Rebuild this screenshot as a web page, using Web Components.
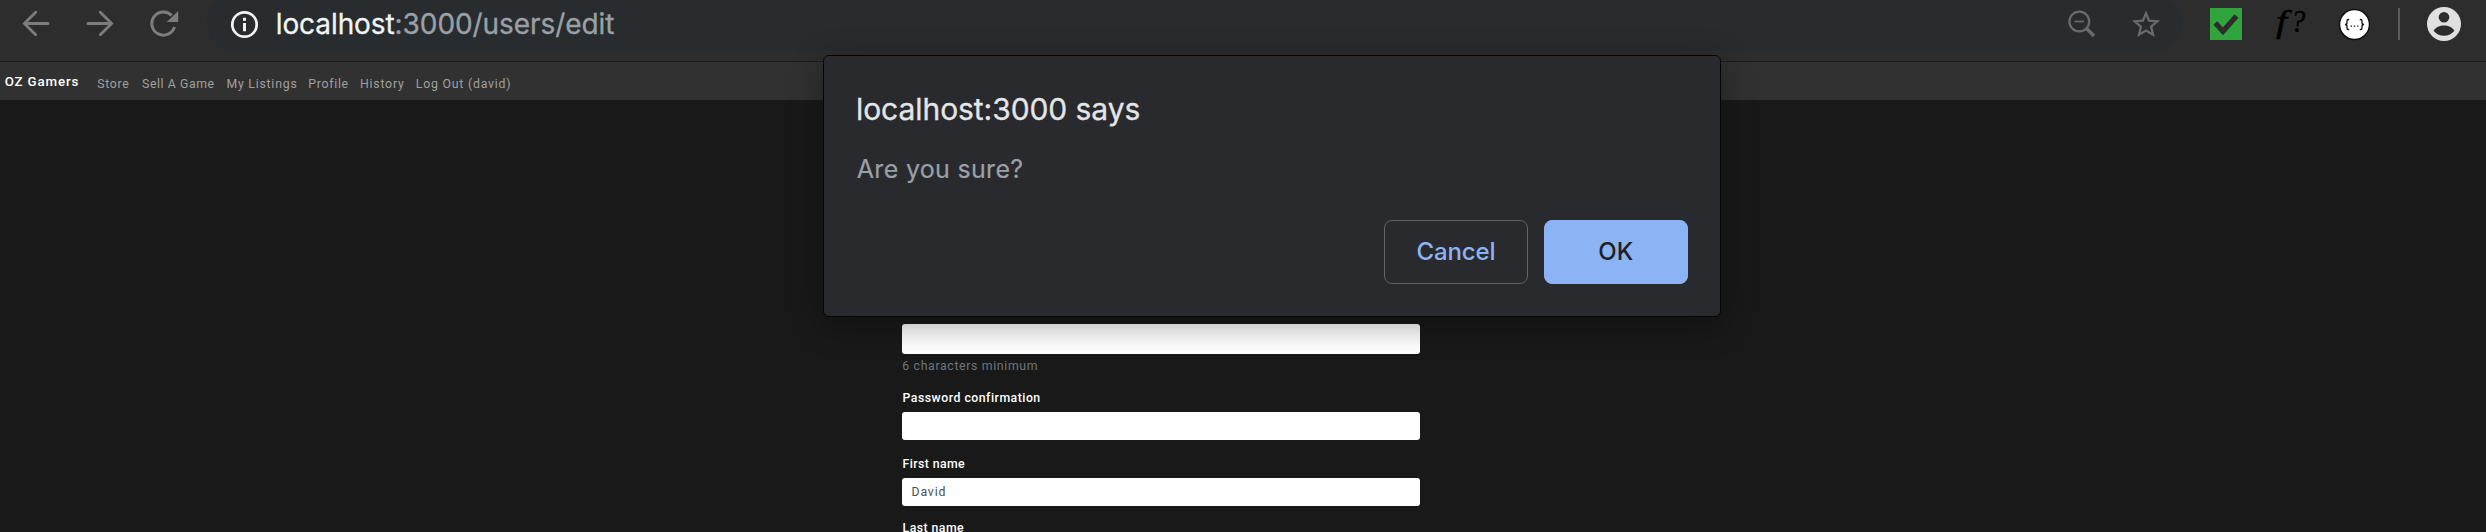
<!DOCTYPE html>
<html lang="en">
<head>
<meta charset="utf-8">
<title>OZ Gamers</title>
<style>
html,body{margin:0;height:532px;overflow:hidden;background:#191919}
body{font-family:Inter,"Liberation Sans",sans-serif;color:#fff}
</style>
</head>
<body>
<browser-window></browser-window>
<script>
const define = (name, html, Base = HTMLElement) => {
  const t = document.createElement('template');
  t.innerHTML = html;
  customElements.define(name, class extends Base {
    constructor() {
      super();
      this.attachShadow({mode: 'open'}).append(t.content.cloneNode(true));
    }
  });
};

/* A single line of text tracked so that its ink spans the width given in w. */
class TrackedBase extends HTMLElement {
  connectedCallback() {
    const w = parseFloat(this.getAttribute('w'));
    const text = this.textContent;
    const cs = getComputedStyle(this);
    const ctx = document.createElement('canvas').getContext('2d');
    ctx.font = `${cs.fontStyle} ${cs.fontWeight} ${cs.fontSize} ${cs.fontFamily}`;
    const m = ctx.measureText(text);
    const ink = m.actualBoundingBoxRight + m.actualBoundingBoxLeft;
    this.style.letterSpacing = ((w - ink) / (text.length - 1)).toFixed(3) + 'px';
    this.style.textIndent = m.actualBoundingBoxLeft.toFixed(2) + 'px';
    this.style.width = w + 'px';
  }
}
define('tracked-text', `<style>:host{display:block;white-space:nowrap;flex:none}</style><slot></slot>`, TrackedBase);

define('tool-bar', `<style>
:host{display:flex;align-items:flex-start;height:61px;background:#2d2d2d;border-bottom:1px solid #1b1b1b;box-sizing:content-box}
svg{display:block;flex:none}
.nav{width:207px;height:50px}
.omni{display:flex;width:1975px;height:55px;margin-top:-4px;border-radius:28px;background:#282c2f;flex:none;align-items:flex-start}
.omni svg{margin-top:4px}
.url{font-size:28px;line-height:40px;margin:8px 0 0 .700px;color:#9aa0a6;-webkit-text-stroke:.3px currentColor}
.url b{font-weight:400;color:#f1f3f4;-webkit-text-stroke:.3px #f1f3f4}
.gap{flex:1}
.fn{display:flex;width:32px;flex:none;font:italic 31px/40px "Liberation Serif",serif;color:#000;-webkit-text-stroke:.4px #000;margin:2px 32px 0 32px}
.fn span{display:block;transform-origin:0 0}
.fn .f{transform:scaleX(1.300);width:20px;text-indent:1.500px}
.fn .q{transform:scaleX(.920)}
</style>
<svg class="nav" viewBox="0 0 207 50" fill="none" stroke="#7d7d7d" stroke-width="2.8" stroke-linecap="round">
<path d="M48 23.5H24.5M35.7 12.3 24.4 23.5l11.3 11.3"/><path d="M88 23.5h23.500M100.300 12.300 111.600 23.500l-11.300 11.300"/>
<path stroke-width="3" stroke-linecap="butt" d="M174.500 27A11.600 11.600 0 1 1 171.700 15.400"/><path d="M178.200 11v11h-11.500z" fill="#7d7d7d" stroke="none"/></svg>
<div class="omni">
<svg width="70" height="50" viewBox="207 0 70 50"><circle cx="244.500" cy="24.500" r="12.200" fill="none" stroke="#f1f3f4" stroke-width="2.700"/><path d="M243 17.800h3v3h-3zM243 23h3v8.300h-3z" fill="#f1f3f4"/></svg>
<tracked-text class="url" w="336.500"><b>localhost</b>:3000/users/edit</tracked-text>
<div class="gap"></div>
<svg width="122" height="50" viewBox="2060 0 122 50" fill="none" stroke="#686b6e"><circle cx="2079.300" cy="21.500" r="9.900" stroke-width="2.300"/><path d="M2074.500 21.500h9.500" stroke-width="1.700"/><path d="m2086.500 28.500 7.500 7.500" stroke-width="3.500"/><path stroke-width="2.300" d="m2146 13.200 3.100 7.500 8.200.7-6.200 5.300 1.900 8-7-4.200-7 4.200 1.900-8-6.200-5.300 8.200-.7z"/></svg>
</div>
<svg width="60" height="50" viewBox="2182 0 60 50"><path fill="#31a53d" d="M2210 8h32v32h-32z"/><path d="m2215.300 23 7.700 8.300 13.500-15.300" fill="none" stroke="#2d2d2d" stroke-width="5.200"/></svg>
<div class="fn"><span class="f">f</span><span class="q">?</span></div>
<svg width="148" height="50" viewBox="2338 0 148 50"><circle cx="2354.500" cy="24.500" r="15" fill="#fff" stroke="#111" stroke-width="1.500"/>
<g fill="none" stroke="#111" stroke-width="1.300"><path d="M2349.200 19.500h-.7q-1.500 0-1.500 1.600v1.700q0 1.700-2 1.700 2 0 2 1.700v1.700q0 1.600 1.500 1.600h.7M2359.800 19.500h.7q1.500 0 1.500 1.600v1.700q0 1.700 2 1.700-2 0-2 1.700v1.700q0 1.600-1.500 1.600h-.7"/></g>
<path fill="#111" d="M2350.700 25.500h1.300v1.300h-1.300zM2353.900 25.500h1.300v1.300h-1.300zM2357.100 25.500h1.300v1.300h-1.300z"/>
<path fill="#5c5c5c" d="M2398 8h2v32h-2z"/>
<circle cx="2444" cy="24" r="17" fill="#e0e0e0"/><circle cx="2444" cy="17.200" r="5.300" fill="#2d2d2d"/><path fill="#2d2d2d" d="M2433.600 30.800c2-3.300 6.300-5.200 10.400-5.200s8.400 1.900 10.400 5.200c-2.200 3-6.200 5-10.400 5s-8.200-2-10.400-5z"/></svg>`);

define('site-nav', `<style>
:host{display:flex;height:38px;background:#313131;padding-left:4.700px;color:#a0a0a0;font-family:Roboto,sans-serif;font-size:12.300px;line-height:20px}
.brand{font-size:13.300px;font-weight:500;color:#fff;margin:9.500px 18.800px 0 0}
.link{margin-top:12px;margin-right:12.800px}
</style>
<tracked-text class="brand" w="73.800">OZ Gamers</tracked-text>
<tracked-text class="link" w="32">Store</tracked-text>
<tracked-text class="link" w="72.500">Sell A Game</tracked-text>
<tracked-text class="link" w="69">My Listings</tracked-text>
<tracked-text class="link" w="39">Profile</tracked-text>
<tracked-text class="link" w="43">History</tracked-text>
<tracked-text class="link" w="93.500">Log Out (david)</tracked-text>`);

define('text-box', `<style>
:host{display:block;box-sizing:border-box;height:28px;border-radius:3px;background:#fff;padding:4px 0 0 10.500px;color:#495057;font-size:12.300px;line-height:20px}
</style><slot></slot>`);

define('edit-form', `<style>
:host{display:flex;flex-direction:column;width:518px;margin-left:902px;padding-top:224px;font-family:Roboto,sans-serif;font-size:12.300px;line-height:20px}
.pw{height:30px}
.hint{color:#6c757d;margin:2px 0 0 .300px}
.label{font-weight:500;margin-left:.600px}
</style>
<text-box class="pw"></text-box>
<tracked-text class="hint" w="134.500">6 characters minimum</tracked-text>
<tracked-text class="label" style="margin-top:12px" w="137.500">Password confirmation</tracked-text>
<text-box style="margin-top:4px"></text-box>
<tracked-text class="label" style="margin-top:14px" w="62.500">First name</tracked-text>
<text-box style="margin-top:4px"><tracked-text w="33">David</tracked-text></text-box>
<tracked-text class="label" style="margin-top:12px" w="61.500">Last name</tracked-text>`);

define('dialog-button', `<style>
:host{display:flex;justify-content:center;box-sizing:border-box;width:144px;height:64px;border:1px solid #5f6368;border-radius:8px;color:#8cb4f5;font-size:24px;font-weight:500;line-height:40px;padding-top:11px}
:host([primary]){background:#8cb4f5;border-color:#8cb4f5;color:#202124}
</style><slot></slot>`);

define('confirm-dialog', `<style>
:host{position:absolute;left:823px;top:55px;width:898px;height:262px;box-sizing:border-box;border:1px solid #050505;border-radius:6px;background:#292a2d;box-shadow:0 8px 32px rgba(0,0,0,.36);padding:33px 32px 32px 34px;display:flex;flex-direction:column}
.title{font-size:30px;line-height:40px;color:#e4e5e7;-webkit-text-stroke:.3px currentColor}
.msg{font-size:25px;line-height:40px;color:#9aa0a6;margin:20px 0 0 -1.200px;-webkit-text-stroke:.2px currentColor}
.row{display:flex;justify-content:flex-end;gap:16px;margin-top:auto}
</style>
<tracked-text class="title" w="281.500">localhost:3000 says</tracked-text>
<tracked-text class="msg" w="165.500">Are you sure?</tracked-text>
<div class="row"><dialog-button><tracked-text w="77">Cancel</tracked-text></dialog-button><dialog-button primary><tracked-text w="33.500">OK</tracked-text></dialog-button></div>`);

define('browser-window', `<style>
:host{display:block;position:relative;width:2486px;height:532px;overflow:hidden;background:#191919}
</style><tool-bar></tool-bar><site-nav></site-nav><edit-form></edit-form><confirm-dialog></confirm-dialog>`);
</script>
</body>
</html>
